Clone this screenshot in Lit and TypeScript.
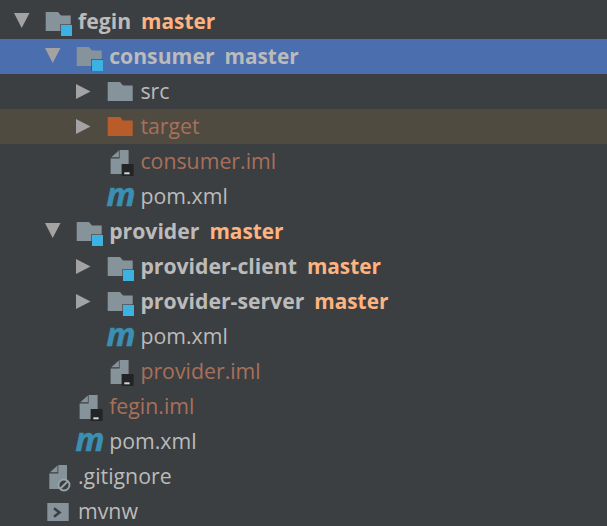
import { LitElement, html, css, svg } from "lit";
import { customElement } from "lit/decorators.js";

type Row = {
  depth: number; arrow?: "down" | "right"; icon: "module" | "folder" | "target" | "iml" | "m" | "ignore" | "shell";
  name: string; branch?: string; bold?: boolean; kind?: "sel" | "excl"; color?: "brown";
};

const rows: Row[] = [
  { depth: 0, arrow: "down", icon: "module", name: "fegin", branch: "master", bold: true },
  { depth: 1, arrow: "down", icon: "module", name: "consumer", branch: "master", bold: true, kind: "sel" },
  { depth: 2, arrow: "right", icon: "folder", name: "src" },
  { depth: 2, arrow: "right", icon: "target", name: "target", kind: "excl", color: "brown" },
  { depth: 2, icon: "iml", name: "consumer.iml", color: "brown" },
  { depth: 2, icon: "m", name: "pom.xml" },
  { depth: 1, arrow: "down", icon: "module", name: "provider", branch: "master", bold: true },
  { depth: 2, arrow: "right", icon: "module", name: "provider-client", branch: "master", bold: true },
  { depth: 2, arrow: "right", icon: "module", name: "provider-server", branch: "master", bold: true },
  { depth: 2, icon: "m", name: "pom.xml" },
  { depth: 2, icon: "iml", name: "provider.iml", color: "brown" },
  { depth: 1, icon: "iml", name: "fegin.iml", color: "brown" },
  { depth: 1, icon: "m", name: "pom.xml" },
  { depth: 0, icon: "ignore", name: ".gitignore" },
  { depth: 0, icon: "shell", name: "mvnw" },
];

const G = "#87939a";
const FOLDER = "M.7 8H13L16 11.500H25.700V27H.7Z";

function icon(kind: Row["icon"]) {
  switch (kind) {
    case "module":
      return svg`<path d=${FOLDER} fill=${G}/><rect x="15" y="20" width="12" height="12" fill="#3c3f41" opacity=".6"/><rect x="16" y="21" width="11" height="11" fill="#3cb2e2"/>`;
    case "folder":
      return svg`<path d=${FOLDER} fill=${G}/>`;
    case "target":
      return svg`<path d=${FOLDER} fill="#b85c2b"/>`;
    case "iml":
      return svg`<path d="M4.300 13.300L11.900 6.600V13.300Z" fill=${G}/><path d="M12.600 6H21.600V30H3.600V14.500H12.600Z" fill=${G}/><rect x="14.600" y="20" width="12" height="12" fill="#222425"/><rect x="17.300" y="28.300" width="5.300" height="2" fill="#d5d5d5"/>`;
    case "m":
      return svg`<text x="-.5" y="27" class="m">m</text>`;
    case "ignore":
      return svg`<path d="M5 13.300L12.500 6.600V13.300Z" fill=${G}/><path d="M13.300 6H22V30H4.300V14.500H13.300Z" fill=${G}/><circle cx="19" cy="26" r="5.500" fill="#3c3f41" stroke="#9aa4aa" stroke-width="1.800"/><path d="M15.500 29.500L22.500 22.500" stroke="#9aa4aa" stroke-width="1.800"/>`;
    case "shell":
      return svg`<rect x="2.300" y="9" width="21.400" height="18" fill=${G}/><path d="M9 14.300L14.500 18.500L9 22.800" fill="none" stroke="#3c3f41" stroke-width="2.600"/>`;
  }
}

@customElement("app-root")
export class AppRoot extends LitElement {
  static styles = css`
    :host {
      display: block;
      width: 607px;
      height: 526px;
      overflow: hidden;
      background: #3c3f41;
      font-family: "Open Sans", "Noto Sans", sans-serif;
      font-size: 21.3px;
    }
    .tree { display: flex; flex-direction: column; padding-top: 4px; }
    .row {
      display: flex;
      align-items: center;
      height: 35px;
      flex: none;
      color: #bbbbbb;
      white-space: nowrap;
    }
    .row.sel { background: #4b6eaf; }
    .row.excl { background: #4f4b41; }
    .arrow { width: 35px; height: 35px; flex: none; display: block; }
    .arrow path { fill: #a3a3a3; }
    .ic { width: 33px; height: 35px; flex: none; display: block; overflow: visible; }
    .m { font: italic 700 32px "Open Sans", sans-serif; fill: #3b8fb2; stroke: #3b8fb2; stroke-width: 0.6px; }
    .name, .branch { padding-bottom: 2px; }
    .name.bold { font-weight: 700; font-size: 21.2px; }
    .name.brown { color: #a8705a; }
    .branch { font-weight: 700; font-size: 20.8px; color: #ffb380; margin-left: 10px; }
    .sel .branch { color: #bbbbbb; }
  `;

  render() {
    return html`<div class="tree">
      ${rows.map(
        (r) => html`<div class="row ${r.kind ?? ""}" style="padding-left:${10 + r.depth * 31.2}px">
          <svg class="arrow" viewBox="0 0 35 35">
            ${r.arrow === "down" ? svg`<path d="M4 9H19.500L11.700 24Z"/>` : r.arrow === "right" ? svg`<path d="M4 10L18.500 17.500L4 25Z"/>` : ""}
          </svg>
          <svg class="ic" viewBox="0 0 33 35">${icon(r.icon)}</svg>
          <span class="name ${r.bold ? "bold" : ""} ${r.color ?? ""}">${r.name}</span>
          ${r.branch ? html`<span class="branch">${r.branch}</span>` : ""}
        </div>`
      )}
    </div>`;
  }
}
